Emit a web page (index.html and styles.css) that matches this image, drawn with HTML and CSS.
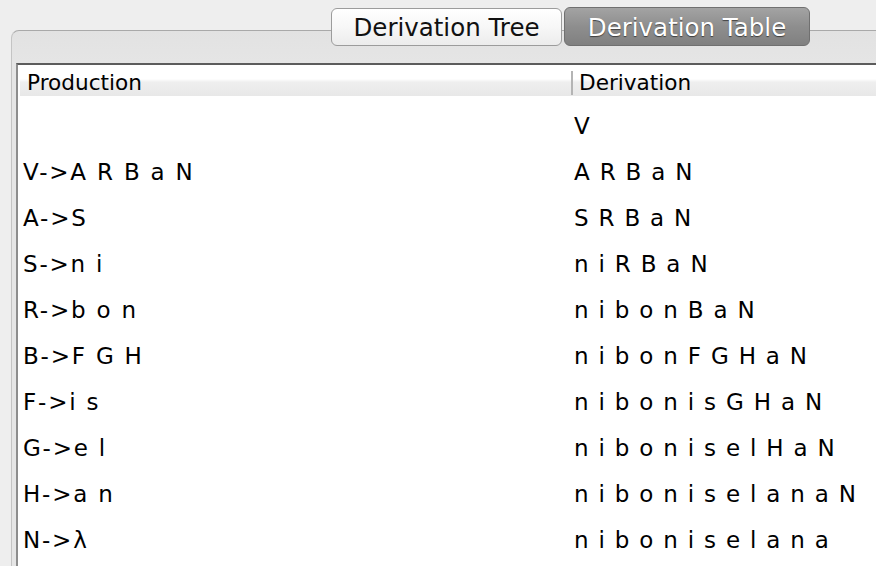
FILE: index.html
```html
<!DOCTYPE html>
<html>
<head>
<meta charset="utf-8">
<link rel="stylesheet" href="styles.css">
</head>
<body>
<div class="window">
  <div class="tabs">
    <div class="tab">Derivation Tree</div>
    <div class="tab selected">Derivation Table</div>
  </div>
  <div class="pane">
    <div class="table">
      <div class="header">
        <div class="hcell prod">Production</div>
        <div class="divider"></div>
        <div class="hcell deriv">Derivation</div>
      </div>
      <div class="rows">
        <div class="row"><div class="cell prod"></div><div class="cell deriv">V</div></div>
        <div class="row"><div class="cell prod">V-&gt;A R B a N</div><div class="cell deriv">A R B a N</div></div>
        <div class="row"><div class="cell prod">A-&gt;S</div><div class="cell deriv">S R B a N</div></div>
        <div class="row"><div class="cell prod">S-&gt;n i</div><div class="cell deriv">n i R B a N</div></div>
        <div class="row"><div class="cell prod">R-&gt;b o n</div><div class="cell deriv">n i b o n B a N</div></div>
        <div class="row"><div class="cell prod">B-&gt;F G H</div><div class="cell deriv">n i b o n F G H a N</div></div>
        <div class="row"><div class="cell prod">F-&gt;i s</div><div class="cell deriv">n i b o n i s G H a N</div></div>
        <div class="row"><div class="cell prod">G-&gt;e l</div><div class="cell deriv">n i b o n i s e l H a N</div></div>
        <div class="row"><div class="cell prod">H-&gt;a n</div><div class="cell deriv">n i b o n i s e l a n a N</div></div>
        <div class="row"><div class="cell prod">N-&gt;λ</div><div class="cell deriv">n i b o n i s e l a n a</div></div>
      </div>
    </div>
  </div>
</div>
</body>
</html>
```
FILE: styles.css
```css
html, body {
  margin: 0;
  padding: 0;
  height: 100%;
  overflow: hidden;
}
body {
  background: #eeeeee;
  font-family: "DejaVu Sans", "Liberation Sans", sans-serif;
  color: #000;
}
.window {
  height: 100%;
  display: flex;
  flex-direction: column;
}
.tabs {
  display: flex;
  gap: 2px;
  padding-top: 8px;
  padding-left: 331px;
  position: relative;
  z-index: 1;
}
.tab {
  box-sizing: border-box;
  height: 38px;
  width: 231px;
  padding-top: 1px;
  border: 1px solid #9c9c9c;
  border-radius: 6px;
  background: linear-gradient(#ffffff 0%, #f7f7f7 50%, #ececec 100%);
  font-size: 24.5px;
  line-height: 35px;
  text-align: center;
  color: #111;
}
.tab.selected {
  width: 246px;
  margin-top: -1px;
  height: 39px;
  padding-top: 2px;
  line-height: 35px;
  border-color: #707070;
  background: linear-gradient(#a3a3a3 0%, #8e8e8e 50%, #808080 100%);
  color: #fff;
  text-shadow: 0 1px 1px rgba(0,0,0,0.55);
}
.pane {
  flex: 1;
  margin-top: -16px;
  margin-left: 11px;
  border-top: 1px solid #a9a9a9;
  border-left: 1px solid #c4c4c4;
  border-top-left-radius: 8px;
  background: linear-gradient(#e2e2e2, #e6e6e6 40px);
  padding: 32px 0 0 4px;
  display: flex;
  flex-direction: column;
}
.table {
  flex: 1;
  background: #fff;
  border-top: 2px solid #5c5c5c;
  border-left: 2px solid #8e8e8e;
}
.header {
  display: flex;
  height: 31px;
  margin-left: 2px;
  background: linear-gradient(#ffffff 0%, #ffffff 45%, #efefef 55%, #e8e8e8 100%);
  font-size: 21.6px;
  line-height: 25px;
}
.hcell {
  padding-top: 5px;
}
.hcell.prod {
  width: 551px;
  box-sizing: border-box;
  padding-left: 7px;
}
.divider {
  width: 2px;
  height: 24px;
  align-self: flex-end;
  margin-bottom: 1px;
  background: #b4b4b4;
}
.hcell.deriv {
  padding-left: 6px;
}
.rows {
  padding-top: 7px;
}
.row {
  display: flex;
  height: 46px;
  font-size: 23px;
  line-height: 46px;
  letter-spacing: 1.3px;
  white-space: pre;
}
.cell.prod {
  width: 553px;
  box-sizing: border-box;
  padding-left: 5px;
  letter-spacing: 1.8px;
}
.cell.deriv {
  padding-left: 3px;
}
```
